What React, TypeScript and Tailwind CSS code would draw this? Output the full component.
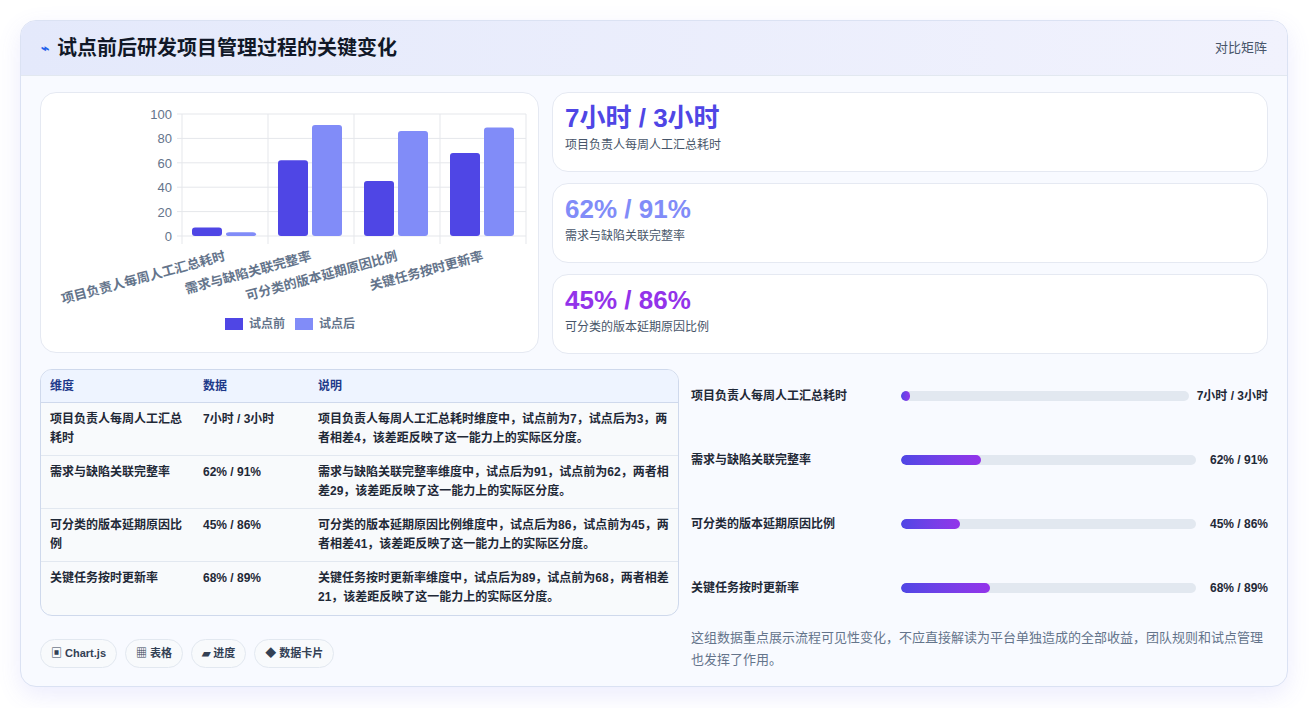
import React from "react";

const F = { fontFamily: '"Liberation Sans","Noto Sans CJK SC",sans-serif' };

const data = [
  { n: "项目负责人每周人工汇总耗时", a: 7, b: 3, v: "7小时 / 3小时", pct: 1, desc: "项目负责人每周人工汇总耗时维度中，试点前为7，试点后为3，两者相差4，该差距反映了这一能力上的实际区分度。", tn: "项目负责人每周人工汇总\n耗时" },
  { n: "需求与缺陷关联完整率", a: 62, b: 91, v: "62% / 91%", pct: 27, desc: "需求与缺陷关联完整率维度中，试点后为91，试点前为62，两者相差29，该差距反映了这一能力上的实际区分度。" },
  { n: "可分类的版本延期原因比例", a: 45, b: 86, v: "45% / 86%", pct: 20, desc: "可分类的版本延期原因比例维度中，试点后为86，试点前为45，两者相差41，该差距反映了这一能力上的实际区分度。", tn: "可分类的版本延期原因比\n例" },
  { n: "关键任务按时更新率", a: 68, b: 89, v: "68% / 89%", pct: 30, desc: "关键任务按时更新率维度中，试点后为89，试点前为68，两者相差21，该差距反映了这一能力上的实际区分度。" },
];

function Chart() {
  const x0 = 141, y0 = 143, w = 344, h = 122, gw = 86;
  const y = (v: number) => y0 - (v / 100) * h;
  return (
    <svg width="498" height="260" style={F}>
      {[0, 20, 40, 60, 80, 100].map((t) => (
        <g key={t}>
          <line x1={x0 - 5} x2={x0 + w} y1={y(t)} y2={y(t)} stroke="#e5e7eb" />
          <text x={x0 - 10} y={y(t) + 5} textAnchor="end" fontSize="13" fill="#64748b">{t}</text>
        </g>
      ))}
      {[0, 1, 2, 3, 4].map((i) => (
        <line key={i} x1={x0 + i * gw} x2={x0 + i * gw} y1={y(100)} y2={y0 + 8} stroke="#e5e7eb" />
      ))}
      {data.map((d, i) => (
        <g key={i}>
          <rect x={x0 + i * gw + 10} y={y(d.a)} width={30} height={y0 - y(d.a)} rx={3} fill="#4f46e5" />
          <rect x={x0 + i * gw + 44} y={y(d.b)} width={30} height={y0 - y(d.b)} rx={3} fill="#818cf8" />
          <text x={x0 + i * gw + 44} y={y0 + 24} textAnchor="end" fontSize="13" fontWeight="600" fill="#64748b" transform={`rotate(-15 ${x0 + i * gw + 44} ${y0 + 24})`}>{d.n}</text>
        </g>
      ))}
      <rect x={184} y={225} width={18} height={12} fill="#4f46e5" />
      <text x={208} y={235} fontSize="12" fontWeight="600" fill="#64748b">试点前</text>
      <rect x={254} y={225} width={18} height={12} fill="#818cf8" />
      <text x={278} y={235} fontSize="12" fontWeight="600" fill="#64748b">试点后</text>
    </svg>
  );
}

export default function App() {
  const stats = [
    { v: "7小时 / 3小时", l: "项目负责人每周人工汇总耗时", c: "text-[#4f46e5]" },
    { v: "62% / 91%", l: "需求与缺陷关联完整率", c: "text-[#818cf8]" },
    { v: "45% / 86%", l: "可分类的版本延期原因比例", c: "text-[#9333ea]" },
  ];
  return (
    <div className="w-[1309px] h-[708px] bg-white pt-5 px-5" style={F}>
      <div className="w-[1268px] h-[667px] rounded-2xl border border-[#dbe2f3] bg-[#f8faff] shadow-[0_8px_24px_rgba(99,102,241,0.12)] overflow-hidden flex flex-col">
        <div className="h-[55px] shrink-0 flex items-center justify-between px-5 bg-gradient-to-r from-[#e4e9fb] to-[#f1f2fd] border-b border-[#e2e8f0]">
          <div className="flex items-center gap-2">
            <span className="text-[#2563eb] text-sm font-bold">⌁</span>
            <span className="text-[20px] font-bold text-[#111827]">试点前后研发项目管理过程的关键变化</span>
          </div>
          <span className="text-[13px] text-[#475569]">对比矩阵</span>
        </div>
        <div className="px-[19px] pt-[16px] flex flex-col gap-[15px]">
          <div className="flex gap-[13px]">
            <div className="w-[499px] h-[261px] rounded-2xl bg-white border border-[#e5e9f2] overflow-hidden"><Chart /></div>
            <div className="flex-1 flex flex-col gap-[11px]">
              {stats.map((s) => (
                <div key={s.v} className="h-[80px] rounded-2xl bg-white border border-[#e5e9f2] px-3 pt-[8px]">
                  <div className={`text-[26px] font-bold leading-[34px] ${s.c}`}>{s.v}</div>
                  <div className="text-xs text-[#475569] mt-[2px]">{s.l}</div>
                </div>
              ))}
            </div>
          </div>
          <div className="flex gap-[12px]">
            <div className="w-[639px] flex flex-col">
              <div className="rounded-xl border border-[#cfd9ec] overflow-hidden bg-[#f8fafc]">
                <div className="flex h-[33px] items-center bg-[#eef4ff] text-xs font-bold text-[#1e3a8a] border-b border-[#cfd9ec]">
                  <div className="w-[153px] pl-[9px]">维度</div>
                  <div className="w-[115px] pl-[9px]">数据</div>
                  <div className="flex-1 pl-[9px]">说明</div>
                </div>
                {data.map((d, i) => (
                  <div key={i} className={`flex text-xs leading-[19px] text-[#1f2937] py-[7px] h-[53px] ${i < 3 ? "border-b border-[#e2e8f0]" : ""}`}>
                    <div className="w-[153px] px-[9px] font-bold whitespace-pre-line">{d.tn ?? d.n}</div>
                    <div className="w-[115px] px-[9px] font-bold">{d.v}</div>
                    <div className="flex-1 px-[9px] font-bold">{d.desc}</div>
                  </div>
                ))}
              </div>
              <div className="flex gap-2 mt-[23px]">
                {["▣ Chart.js", "▦ 表格", "▰ 进度", "◆ 数据卡片"].map((t) => (
                  <span key={t} className="h-[29px] px-[10px] flex items-center rounded-full border border-[#e2e8f0] bg-[#f8fafc] text-[11px] font-bold text-[#334155]">{t}</span>
                ))}
              </div>
            </div>
            <div className="flex-1 flex flex-col pt-[14px]">
              {data.map((d, i) => (
                <div key={i} className="flex items-center h-[64px] pb-[38px] text-xs font-bold text-[#1f2937]">
                  <div className="w-[210px]">{d.n}</div>
                  <div className="flex-1 h-[10px] rounded-full bg-[#e2e8f0] overflow-hidden">
                    <div className="h-full rounded-full bg-gradient-to-r from-[#4f46e5] to-[#9333ea]" style={{ width: `${Math.max(d.pct, 3)}%` }} />
                  </div>
                  <div className="pl-2 text-right whitespace-nowrap min-w-[72px]">{d.v}</div>
                </div>
              ))}
              <p className="text-[13px] leading-[22px] text-[#64748b] mt-[-12px]">这组数据重点展示流程可见性变化，不应直接解读为平台单独造成的全部收益，团队规则和试点管理也发挥了作用。</p>
            </div>
          </div>
        </div>
      </div>
    </div>
  );
}
